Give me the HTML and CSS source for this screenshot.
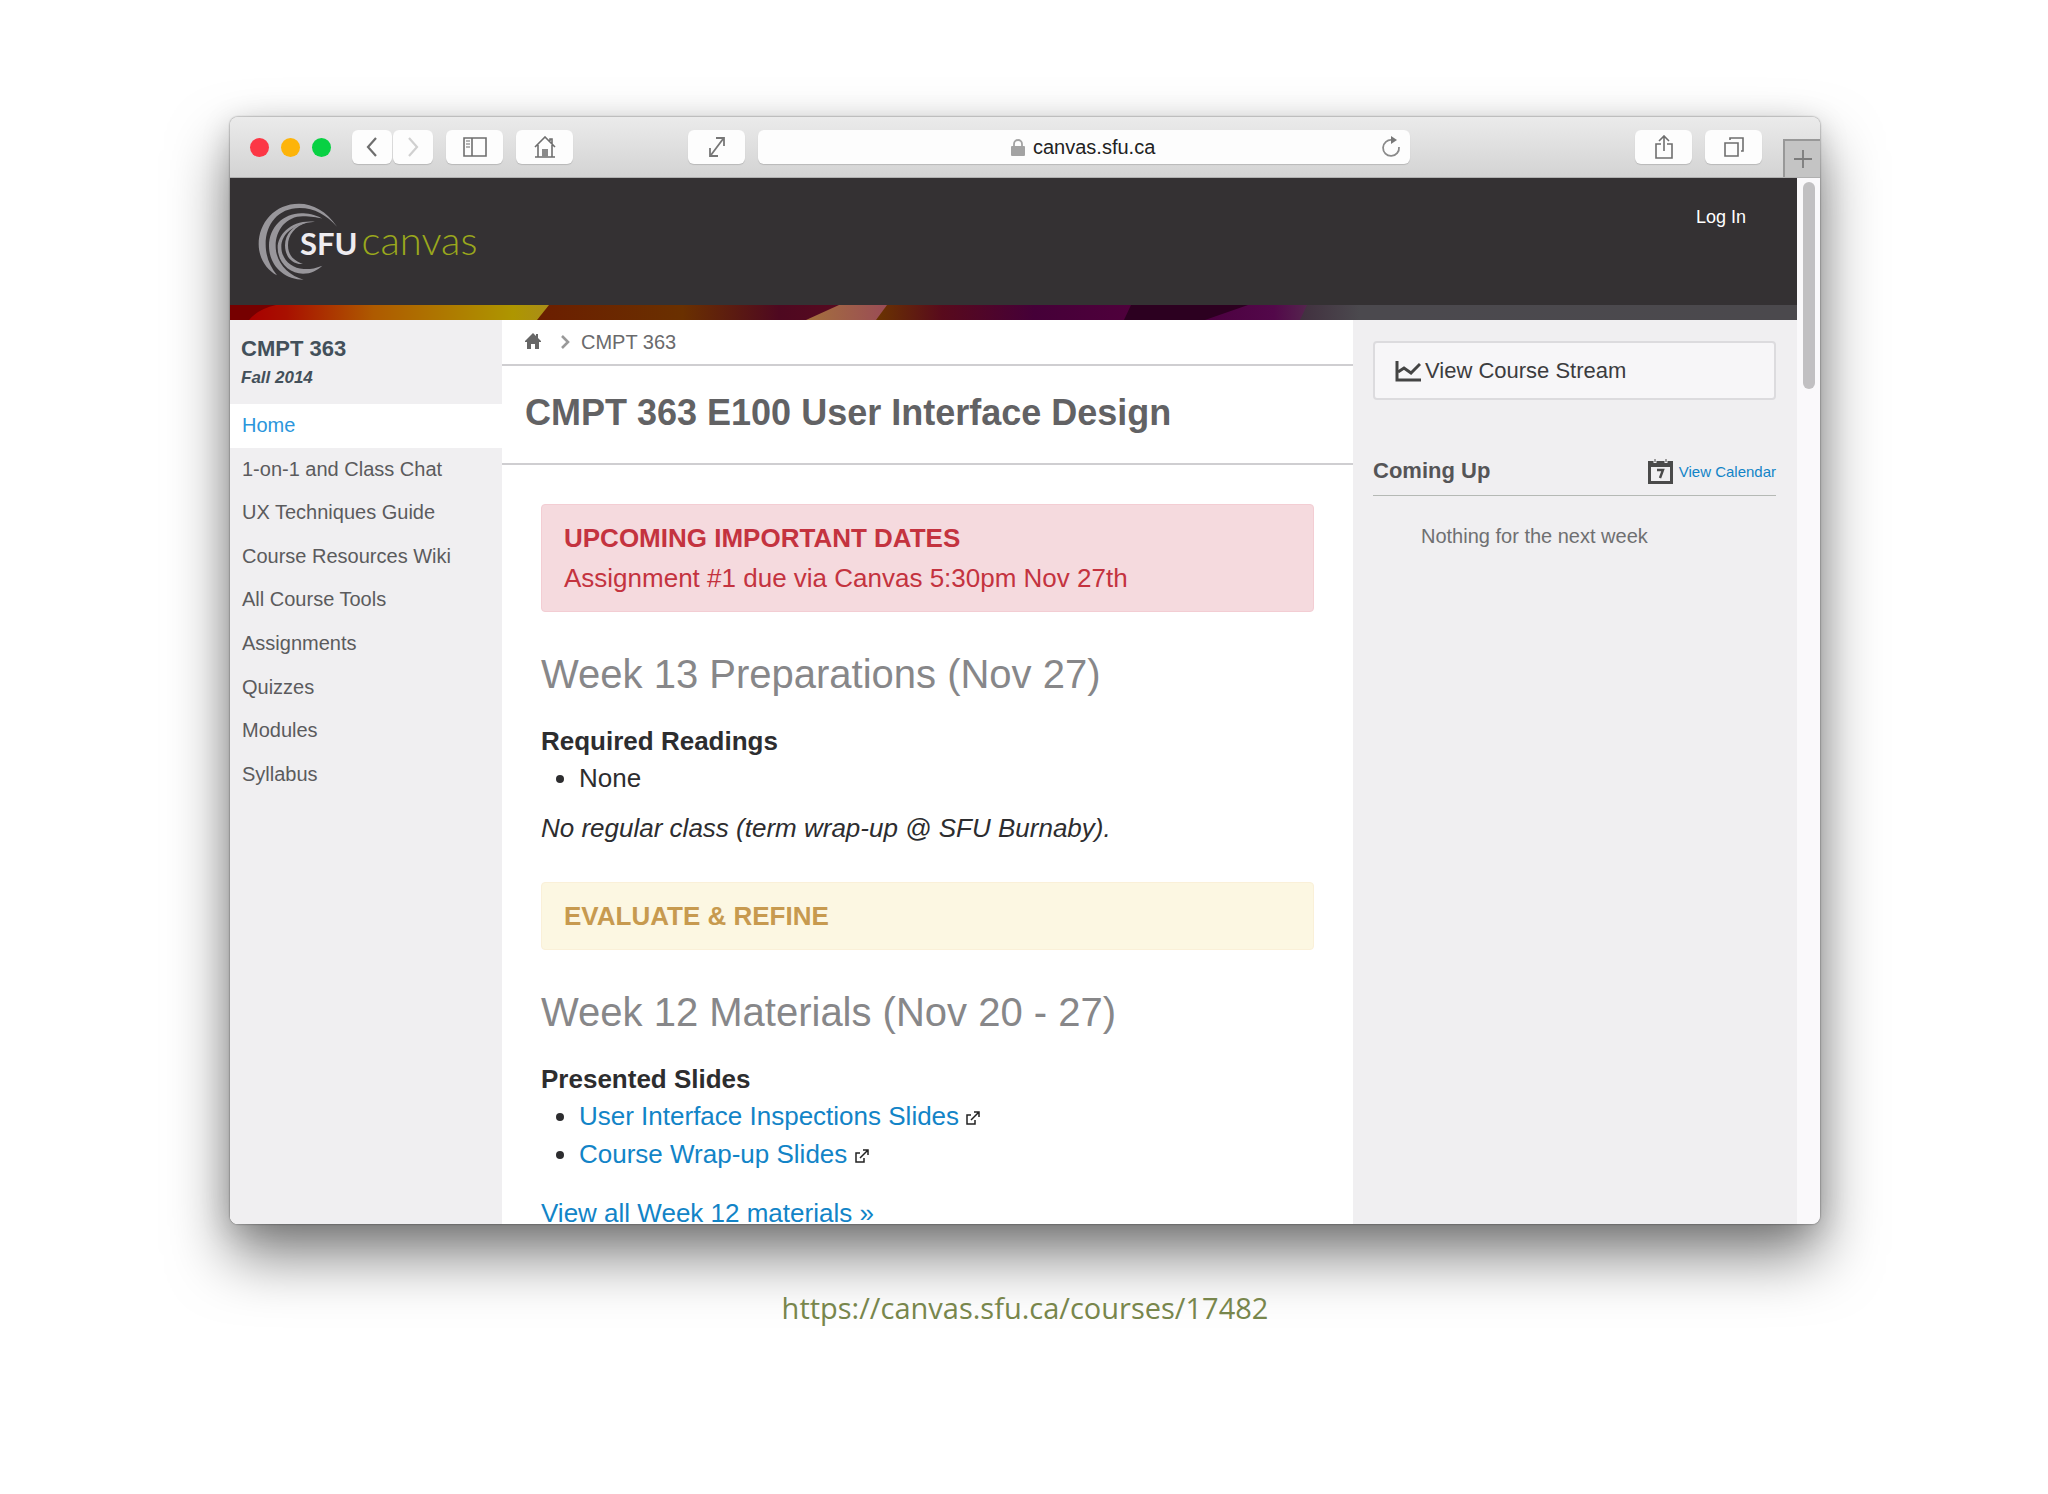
FILE: index.html
```html
<!DOCTYPE html>
<html lang="en">
<head>
    <meta charset="utf-8">
    <title>CMPT 363 E100 User Interface Design</title>
    <link rel="stylesheet" href="styles.css">
</head>
<body>
    <div class="window">
        <div class="toolbar">
            <div class="lights">
                <span class="light red"></span>
                <span class="light yellow"></span>
                <span class="light green"></span>
            </div>
            <div class="history">
                <button class="tool small" aria-label="Back">
                    <svg width="14" height="20" viewBox="0 0 14 20"><path d="M11 1 3 10l8 9" fill="none" stroke="#6e6e6e" stroke-width="2.2"/></svg>
                </button>
                <button class="tool small" aria-label="Forward">
                    <svg width="14" height="20" viewBox="0 0 14 20"><path d="M3 1l8 9-8 9" fill="none" stroke="#d0d0d0" stroke-width="2.2"/></svg>
                </button>
            </div>
            <button class="tool" aria-label="Sidebar">
                <svg width="24" height="20" viewBox="0 0 24 20" fill="none" stroke="#6e6e6e"><path d="M1 1h22v18H1zM9 1v18" stroke-width="1.6"/><path d="M3 4h4M3 7h4M3 10h4" stroke-width="1.2"/></svg>
            </button>
            <button class="tool" aria-label="Home">
                <svg width="22" height="22" viewBox="0 0 22 22" fill="none" stroke="#6e6e6e" stroke-width="1.6"><path d="M1 11 11 1l10 10M4 9v12M18 9v12M1 21h20M16 5V3h2v5"/><path d="M8 13h6v8H8z" fill="#8a8a8a" stroke="none"/></svg>
            </button>
            <button class="tool resize" aria-label="Resize">
                <svg width="18" height="22" viewBox="0 0 18 22" fill="none" stroke="#777" stroke-width="1.8"><path d="M3 19 15 3M8 2h8v8M2 12v8h8"/></svg>
            </button>
            <form class="address">
                <svg width="14" height="17" viewBox="0 0 14 17"><path d="M3 8V5a4 4 0 0 1 8 0v3" fill="none" stroke="#a3a3a3" stroke-width="1.8"/><rect y="7" width="14" height="10" rx="1" fill="#a3a3a3"/></svg>
                <input type="text" value="canvas.sfu.ca" aria-label="Address">
                <button type="button" class="reload" aria-label="Reload">
                    <svg width="20" height="22" viewBox="0 0 20 22"><path d="M11 4a8 8 0 1 0 7 7" fill="none" stroke="#8a8a8a" stroke-width="1.8"/><path d="M10 0l6 4-6 4z" fill="#777"/></svg>
                </button>
            </form>
            <button class="tool" aria-label="Share">
                <svg width="20" height="24" viewBox="0 0 20 24" fill="none" stroke="#6e6e6e" stroke-width="1.6"><path d="M7 9H2v14h16V9h-5M10 16V2M5 6l5-5 5 5"/></svg>
            </button>
            <button class="tool tabs" aria-label="Tabs">
                <svg width="20" height="20" viewBox="0 0 20 20" fill="none" stroke="#6e6e6e" stroke-width="1.6"><path d="M1 6h13v13H1zM6 3V1h13v13h-2"/></svg>
            </button>
            <button class="new-tab" aria-label="New tab">
                <svg width="18" height="18" viewBox="0 0 18 18"><path d="M9 0v18M0 9h18" stroke="#7c7c7c" stroke-width="1.8"/></svg>
            </button>
        </div>

        <div class="viewport">
            <div class="page">
                <header class="header">
                    <a class="logo" href="#">
                        <svg class="logo-mark" width="83" height="82" viewBox="112 285 249 246" fill="#98969b">
                            <path d="M352 362C320 315 280 293 238 293C165 293 117 350 117 415C117 455 140 492 172 508C150 480 138 450 138 415C138 355 175 306 240 306C285 306 320 327 352 362z"/>
                            <path d="M308 338C285 325 262 322 245 322C190 322 148 365 148 420C148 475 190 521 252 521C205 508 168 470 168 420C168 372 200 331 250 331C275 331 290 334 308 338z"/>
                            <path d="M286 347C215 340 174 385 174 425C174 470 210 503 250 503C275 503 292 493 308 479C285 488 270 490 252 489C215 487 185 460 185 422C185 385 220 352 286 347z"/>
                            <path d="M264 349C220 355 196 385 196 418C196 452 218 477 250 474C225 465 205 450 205 418C205 388 225 360 264 349z"/>
                        </svg>
                        <span class="logo-text"><b>SFU</b><i>canvas</i></span>
                    </a>
                    <a class="login" href="#">Log In</a>
                </header>
                <svg class="strip" viewBox="0 0 1567 15" preserveAspectRatio="none">
                    <defs>
                        <linearGradient id="gold"><stop offset="0" stop-color="#a80000"/><stop offset=".12" stop-color="#a81000"/><stop offset=".4" stop-color="#ae5a00"/><stop offset=".85" stop-color="#ae9600"/><stop offset="1" stop-color="#a98a20"/></linearGradient>
                        <linearGradient id="brown"><stop offset="0" stop-color="#6b1e00"/><stop offset=".45" stop-color="#6a3000"/><stop offset=".75" stop-color="#4e0820"/><stop offset="1" stop-color="#5a0a20"/></linearGradient>
                        <linearGradient id="pink"><stop offset="0" stop-color="#a4703c"/><stop offset="1" stop-color="#98465a"/></linearGradient>
                        <linearGradient id="plum"><stop offset="0" stop-color="#6a3400"/><stop offset=".25" stop-color="#580a1c"/><stop offset=".6" stop-color="#450038"/><stop offset="1" stop-color="#50003c"/></linearGradient>
                        <linearGradient id="violet"><stop offset="0" stop-color="#4c0040"/><stop offset=".6" stop-color="#53084a"/><stop offset="1" stop-color="#55304f"/></linearGradient>
                        <linearGradient id="slate"><stop offset="0" stop-color="#41303f"/><stop offset=".12" stop-color="#4b494e"/><stop offset="1" stop-color="#4b494d"/></linearGradient>
                    </defs>
                    <path d="M0 0h60v15H0z" fill="#760000"/>
                    <path d="M19 15Q28 4 46 0H330V15z" fill="url(#gold)"/>
                    <path d="M319 0H630V15H307z" fill="url(#brown)"/>
                    <path d="M609 0H670V15H576z" fill="url(#pink)"/>
                    <path d="M657 0H910V15H646z" fill="url(#plum)"/>
                    <path d="M901 0H1030V15H894z" fill="#2c0020"/>
                    <path d="M1018 0H1090V15H975z" fill="url(#violet)"/>
                    <path d="M1077 0H1567V15H1070z" fill="url(#slate)"/>
                </svg>

                <div class="columns">
                    <aside class="course-menu">
                        <div class="course-name">CMPT 363</div>
                        <div class="term">Fall 2014</div>
                        <nav>
                            <a class="active" href="#">Home</a>
                            <a href="#">1-on-1 and Class Chat</a>
                            <a href="#">UX Techniques Guide</a>
                            <a href="#">Course Resources Wiki</a>
                            <a href="#">All Course Tools</a>
                            <a href="#">Assignments</a>
                            <a href="#">Quizzes</a>
                            <a href="#">Modules</a>
                            <a href="#">Syllabus</a>
                        </nav>
                    </aside>

                    <main>
                        <div class="breadcrumb">
                            <a href="#" aria-label="Home"><svg width="16" height="16" viewBox="0 0 16 16" fill="#666"><path d="M8 0 0 8v1h2v7h4v-5h4v5h4V9h2V8l-3-3V1h-2v2z"/></svg></a>
                            <svg width="9" height="14" viewBox="0 0 9 14"><path d="M1 1l6 6-6 6" fill="none" stroke="#999" stroke-width="2.6"/></svg>
                            <a href="#">CMPT 363</a>
                        </div>
                        <h1>CMPT 363 E100 User Interface Design</h1>
                        <div class="content">
                            <div class="alert danger">
                                <strong>UPCOMING IMPORTANT DATES</strong><br>
                                Assignment #1 due via Canvas 5:30pm Nov 27th
                            </div>
                            <h2>Week 13 Preparations (Nov 27)</h2>
                            <h3>Required Readings</h3>
                            <ul>
                                <li>None</li>
                            </ul>
                            <p class="note">No regular class (term wrap-up @ SFU Burnaby).</p>
                            <div class="alert warning"><strong>EVALUATE &amp; REFINE</strong></div>
                            <h2>Week 12 Materials (Nov 20 - 27)</h2>
                            <h3>Presented Slides</h3>
                            <ul>
                                <li><a href="#">User Interface Inspections Slides</a> <svg class="external" width="14" height="14" viewBox="0 0 14 14" fill="none" stroke="#222" stroke-width="1.5"><path d="M5 4H1v9h8V9M5 9l8-8M8 1h5v5"/></svg></li>
                                <li><a href="#">Course Wrap-up Slides</a> <svg class="external" width="14" height="14" viewBox="0 0 14 14" fill="none" stroke="#222" stroke-width="1.5"><path d="M5 4H1v9h8V9M5 9l8-8M8 1h5v5"/></svg></li>
                            </ul>
                            <p class="more"><a href="#">View all Week 12 materials »</a></p>
                        </div>
                    </main>

                    <aside class="right-side">
                        <button class="stream">
                            <svg width="26" height="22" viewBox="0 0 26 22" fill="none" stroke="#444" stroke-width="3"><path d="M2 1v19h24"/><path d="M3 12l6-4 7 5 9-9" stroke-width="3"/></svg>
                            View Course Stream
                        </button>
                        <div class="coming-up">
                            <h4>Coming Up</h4>
                            <a href="#">
                                <svg width="25" height="25" viewBox="0 0 25 25"><path d="M0 2h25v23H0z" fill="#4a4a4a"/><path d="M3 8h19v14H3z" fill="#f0eff1"/><path d="M7 0v4M18 0v4" stroke="#f0eff1" stroke-width="3"/><path d="M7 0v3M18 0v3" stroke="#4a4a4a"/><path d="M9 11h6l-3 8" fill="none" stroke="#4a4a4a" stroke-width="2.4"/></svg>
                                View Calendar
                            </a>
                        </div>
                        <p class="nothing">Nothing for the next week</p>
                    </aside>
                </div>
            </div>
            <div class="scrollbar"><div class="thumb"></div></div>
        </div>
    </div>
    <a class="caption" href="#">https://canvas.sfu.ca/courses/17482</a>
</body>
</html>
```
FILE: styles.css
```css
* {
    box-sizing: border-box;
}
body {
    margin: 0;
    padding: 117px 228px 0 230px;
    background-color: white;
    color: #2d2d2f;
    font-family: "Liberation Sans", Arial, sans-serif;
    font-size: 20px;
    text-align: center;
    overflow: hidden;
}
a {
    color: #1284c7;
    text-decoration: none;
}
button {
    border: none;
    padding: 0;
    font-family: inherit;
    cursor: pointer;
}
h1, h2, h3, h4, p, ul {
    margin: 0;
    padding: 0;
}

/* browser window */
.window {
    display: flex;
    flex-direction: column;
    height: calc(100vh - 387px);
    border-radius: 8px;
    overflow: hidden;
    text-align: left;
    box-shadow: 0 0 2px rgba(0,0,0,0.6), 0 32px 60px rgba(0,0,0,0.5), 0 6px 30px rgba(0,0,0,0.15);
}
.toolbar {
    display: flex;
    align-items: center;
    flex: none;
    height: 61px;
    padding-left: 20px;
    background: linear-gradient(#ebebeb, #d3d3d3);
    border-bottom: 1px solid #b0b0b0;
}
.lights {
    display: flex;
    gap: 12px;
}
.light {
    width: 19px;
    height: 19px;
    border-radius: 50%;
}
.red {
    background-color: #fc3745;
}
.yellow {
    background-color: #fdb40a;
}
.green {
    background-color: #08d143;
}
.history {
    display: flex;
    gap: 1px;
    margin-left: 21px;
}
.tool {
    display: flex;
    align-items: center;
    justify-content: center;
    flex: none;
    width: 57px;
    height: 34px;
    margin-left: 13px;
    border-radius: 6px;
    background-color: #fdfdfd;
    box-shadow: 0 1px 1px rgba(0,0,0,0.15);
}
.tool.small {
    width: 40px;
    margin-left: 0;
}
.resize {
    margin-left: 115px;
}
.address {
    position: relative;
    display: flex;
    align-items: center;
    justify-content: center;
    gap: 8px;
    flex: 1;
    height: 34px;
    margin: 0 212px 0 13px;
    border-radius: 6px;
    background-color: #fdfdfd;
    box-shadow: 0 1px 1px rgba(0,0,0,0.15);
}
.address input {
    width: 124px;
    padding: 0;
    border: none;
    outline: none;
    background: none;
    font-family: inherit;
    font-size: 20px;
    color: #222;
}
.reload {
    position: absolute;
    right: 9px;
    top: 6px;
    height: 22px;
    background: none;
}
.new-tab {
    display: flex;
    align-items: center;
    justify-content: center;
    align-self: flex-end;
    width: 37px;
    height: 38px;
    margin-left: 21px;
    border: 1px solid #989898;
    border-width: 2px 0 0 2px;
    background-color: #c4c4c4;
}

.viewport {
    display: flex;
    flex: 1;
    min-height: 0;
}
.page {
    display: flex;
    flex-direction: column;
    flex: 1;
    overflow: hidden;
}
.scrollbar {
    width: 23px;
    padding: 4px 5px 0 6px;
    background-color: #faf9fb;
}
.thumb {
    height: 207px;
    border-radius: 6px;
    background-color: #c1c0c2;
}

/* header */
.header {
    display: flex;
    align-items: flex-start;
    justify-content: space-between;
    flex: none;
    height: 127px;
    padding: 22px 51px 0 27px;
    background-color: #343133;
}
.logo {
    display: flex;
    align-items: center;
}
.logo-text {
    display: flex;
    align-items: baseline;
    gap: 4px;
    margin-left: -40px;
    font-family: Lato, sans-serif;
    line-height: 80px;
}
.logo-text b {
    color: #eeecf0;
    font-size: 31px;
    font-weight: 700;
}
.logo-text i {
    color: #9aa81c;
    font-size: 40px;
    font-style: normal;
    font-weight: 300;
}
.login {
    margin-top: 7px;
    color: white;
    font-size: 18px;
}
.strip {
    display: block;
    flex: none;
    width: 100%;
    height: 15px;
}

/* columns */
.columns {
    display: grid;
    grid-template-columns: 272px 1fr 444px;
    flex: 1;
    min-height: 0;
    background-color: white;
}
.course-menu {
    padding-top: 14px;
    background-color: #f0eff1;
}
.course-name, .term {
    padding-left: 11px;
    color: #43505a;
    font-weight: bold;
}
.course-name {
    font-size: 22px;
    line-height: 30px;
}
.term {
    font-size: 17px;
    font-style: italic;
    line-height: 28px;
}
nav {
    display: grid;
    grid-auto-rows: 1fr;
    height: 392px;
    margin-top: 12px;
}
nav a {
    display: flex;
    align-items: center;
    padding-left: 12px;
    color: #5b5b5d;
}
nav a.active {
    background-color: white;
    color: #2b96dc;
}

main {
    min-height: 0;
    overflow: hidden;
}
.breadcrumb {
    display: flex;
    align-items: center;
    height: 46px;
    padding-left: 23px;
    border-bottom: 2px solid #cfced1;
}
.breadcrumb a {
    color: #6a6a6c;
}
.breadcrumb > svg {
    margin: 0 11px 0 20px;
}
h1 {
    padding: 0 0 3px 23px;
    border-bottom: 2px solid #cfced1;
    color: #626264;
    font-size: 36px;
    line-height: 94px;
}
.content {
    padding: 39px 39px 0 39px;
    font-size: 26px;
    line-height: 36px;
}
.alert {
    padding: 13px 22px;
    border: 1px solid #f3cdd3;
    border-radius: 4px;
    line-height: 40px;
}
.danger {
    background-color: #f5dade;
    color: #c4333f;
}
.warning {
    margin-top: 36px;
    border-color: #faf0d8;
    background-color: #fcf7e2;
    color: #c79a4f;
}
h2 {
    margin-top: 38px;
    color: #878789;
    font-size: 40px;
    font-weight: normal;
    line-height: 48px;
}
h3 {
    margin-top: 25px;
    font-size: 26px;
    line-height: 36px;
}
ul {
    padding-left: 38px;
    line-height: 38px;
}
.note {
    margin-top: 13px;
    font-style: italic;
}
.more {
    margin-top: 22px;
}

.right-side {
    padding: 21px 21px 0 20px;
    background-color: #f0eff1;
}
.stream {
    display: flex;
    align-items: center;
    gap: 4px;
    width: 100%;
    height: 59px;
    padding-left: 20px;
    border: 2px solid #dcdbde;
    border-radius: 4px;
    background-color: #f7f6f8;
    color: #3c3c3e;
    font-size: 22px;
}
.coming-up {
    display: flex;
    align-items: center;
    justify-content: space-between;
    margin-top: 47px;
    height: 49px;
    border-bottom: 1px solid #b5b9b5;
}
.coming-up h4 {
    color: #555557;
    font-size: 22px;
}
.coming-up a {
    display: flex;
    align-items: center;
    gap: 6px;
    font-size: 15px;
}
.nothing {
    margin-top: 28px;
    padding-left: 48px;
    color: #6f6f71;
    line-height: 24px;
}

.caption {
    display: block;
    margin-top: 64px;
    color: #78864c;
    font-family: "Open Sans", sans-serif;
    font-size: 29px;
    line-height: 40px;
}
```
